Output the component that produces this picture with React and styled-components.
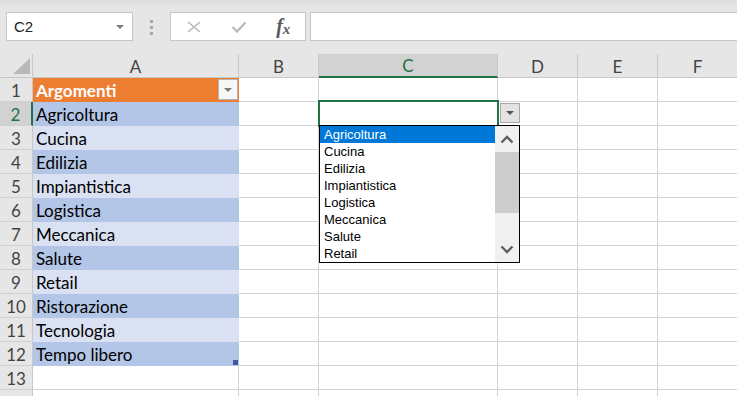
import React from "react";
import styled, { createGlobalStyle } from "styled-components";

const GlobalStyle = createGlobalStyle`
  html, body {
    margin: 0;
    padding: 0;
  }
  body {
    width: 737px;
    height: 396px;
    overflow: hidden;
    background: #fff;
    font-family: Lato, "Liberation Sans", sans-serif;
  }
`;

const columns = ["A", "B", "C", "D", "E", "F"];
const topics = [
  "Agricoltura",
  "Cucina",
  "Edilizia",
  "Impiantistica",
  "Logistica",
  "Meccanica",
  "Salute",
  "Retail",
  "Ristorazione",
  "Tecnologia",
  "Tempo libero",
];
const listItems = topics.slice(0, 8);

export default function App() {
  const rows = Array.from({ length: 14 }, (_, i) => i + 1);

  const cellFill = (row, col) => {
    if (col !== 0) return null;
    if (row === 1) return "#ed7d31";
    if (row >= 2 && row <= 12) return row % 2 === 0 ? "#b4c6e7" : "#d9e1f2";
    return null;
  };

  return (
    <>
      <GlobalStyle />
      <Toolbar>
        <NameBox>
          <span>C2</span>
          <SmallArrow />
        </NameBox>
        <Grip>
          <i />
          <i />
          <i />
        </Grip>
        <FxBox>
          <svg width="16" height="12" viewBox="0 0 16 12">
            <path d="M2 1 L14 11 M14 1 L2 11" stroke="#b8b8b8" strokeWidth="1.6" fill="none" />
          </svg>
          <svg width="16" height="12" viewBox="0 0 16 12">
            <path d="M1.5 6 L6 10.5 L14.5 1.5" stroke="#b8b8b8" strokeWidth="2.2" fill="none" />
          </svg>
          <FxLabel>
            f<sub>x</sub>
          </FxLabel>
        </FxBox>
        <FormulaInput />
      </Toolbar>

      <Sheet>
        <Corner />
        {columns.map((c) => (
          <ColHead key={c} $active={c === "C"}>
            {c}
          </ColHead>
        ))}
        {rows.map((r) => (
          <React.Fragment key={r}>
            {/* the last row is only a sliver at the window's bottom edge */}
            <RowHead $active={r === 2}>{r < 14 ? r : null}</RowHead>
            {columns.map((c, ci) => {
              const fill = cellFill(r, ci);
              return (
                <Cell key={c} $fill={fill} $header={r === 1 && ci === 0} $raised={ci === 2 && r === 2}>
                  {ci === 0 && r === 1 && (
                    <>
                      Argomenti
                      <FilterButton>
                        <SmallArrow />
                      </FilterButton>
                    </>
                  )}
                  {ci === 0 && r >= 2 && r <= 12 && topics[r - 2]}
                  {ci === 0 && r === 12 && <ResizeHandle />}
                  {ci === 2 && r === 2 && (
                    <>
                      <Selection />
                      <ListButton>
                        <SmallArrow $dark />
                      </ListButton>
                      <DropList>
                        <Items>
                          {listItems.map((t, i) => (
                            <Item key={t} $selected={i === 0}>
                              {t}
                            </Item>
                          ))}
                        </Items>
                        <ScrollBar>
                          <ScrollArrow>
                            <svg width="14" height="9" viewBox="0 0 14 9">
                              <path d="M1.5 7.5 L7 2 L12.5 7.5" stroke="#5f5f5f" strokeWidth="2.4" fill="none" />
                            </svg>
                          </ScrollArrow>
                          <Track>
                            <Thumb />
                          </Track>
                          <ScrollArrow>
                            <svg width="14" height="9" viewBox="0 0 14 9">
                              <path d="M1.5 1.5 L7 7 L12.5 1.5" stroke="#5f5f5f" strokeWidth="2.4" fill="none" />
                            </svg>
                          </ScrollArrow>
                        </ScrollBar>
                      </DropList>
                    </>
                  )}
                </Cell>
              );
            })}
          </React.Fragment>
        ))}
      </Sheet>
    </>
  );
}

const Toolbar = styled.div`
  display: flex;
  align-items: flex-start;
  height: 54px;
  box-sizing: border-box;
  padding: 12px 0 0 6px;
  background: linear-gradient(#dcdcdc, #e6e6e6 6px);
`;

const NameBox = styled.div`
  display: flex;
  align-items: center;
  justify-content: space-between;
  width: 127px;
  height: 29px;
  box-sizing: border-box;
  padding: 0 8px 0 7px;
  background: #fff;
  border: 1px solid #c6c6c6;
  font-family: "Liberation Sans", sans-serif;
  font-size: 15px;
  color: #222;
`;

const SmallArrow = styled.span`
  width: 0;
  height: 0;
  border-left: 4px solid transparent;
  border-right: 4px solid transparent;
  border-top: 4px solid ${(p) => (p.$dark ? "#555" : "#7a7a7a")};
`;

const Grip = styled.div`
  display: flex;
  flex-direction: column;
  gap: 3px;
  margin: 8px 0 0 17px;

  i {
    display: block;
    width: 3px;
    height: 3px;
    background: #a6a6a6;
  }
`;

const FxBox = styled.div`
  display: flex;
  align-items: center;
  justify-content: space-around;
  width: 136px;
  height: 29px;
  box-sizing: border-box;
  margin-left: 17px;
  background: #fff;
  border: 1px solid #c6c6c6;
`;

const FxLabel = styled.span`
  font-family: "Liberation Serif", serif;
  font-style: italic;
  font-weight: bold;
  font-size: 20px;
  color: #5a5a5a;
  line-height: 1;
  margin-top: -2px;

  sub {
    font-size: 15px;
    vertical-align: baseline;
    position: relative;
    top: 1px;
  }
`;

const FormulaInput = styled.div`
  flex: 1;
  height: 29px;
  box-sizing: border-box;
  margin-left: 4px;
  background: #fff;
  border: 1px solid #c6c6c6;
  border-right: none;
`;

const Sheet = styled.div`
  display: grid;
  grid-template-columns: 33px 206px 80px 179px 80px 80px 80px;
  grid-auto-rows: 24px;
`;

const Corner = styled.div`
  position: relative;
  background: #e6e6e6;
  border-right: 1px solid #c8c8c8;
  border-bottom: 1px solid #c8c8c8;

  &::after {
    content: "";
    position: absolute;
    right: 2px;
    bottom: 3px;
    width: 17px;
    height: 16px;
    background: #b9b9b9;
    clip-path: polygon(100% 0, 100% 100%, 0 100%);
  }
`;

const ColHead = styled.div`
  display: flex;
  align-items: center;
  justify-content: center;
  box-sizing: border-box;
  background: ${(p) => (p.$active ? "#d2d2d2" : "#e6e6e6")};
  color: ${(p) => (p.$active ? "#217346" : "#444")};
  border-right: 1px solid #c8c8c8;
  border-bottom: ${(p) => (p.$active ? "2px solid #217346" : "1px solid #c8c8c8")};
  font-size: 17px;
  padding-top: 1px;
`;

const RowHead = styled.div`
  display: flex;
  align-items: center;
  justify-content: center;
  box-sizing: border-box;
  background: ${(p) => (p.$active ? "#d2d2d2" : "#e6e6e6")};
  color: ${(p) => (p.$active ? "#217346" : "#444")};
  border-right: ${(p) => (p.$active ? "2px solid #217346" : "1px solid #c8c8c8")};
  border-bottom: 1px solid #d0d0d0;
  font-size: 17px;
  padding-top: 1px;
`;

const Cell = styled.div`
  position: relative;
  z-index: ${(p) => (p.$raised ? 2 : "auto")};
  display: flex;
  align-items: center;
  box-sizing: border-box;
  padding: 1px 0 0 3px;
  background: ${(p) => p.$fill || "#fff"};
  border-right: 1px solid ${(p) => p.$fill || "#d4d4d4"};
  border-bottom: 1px solid ${(p) => p.$fill || "#d4d4d4"};
  font-size: 17px;
  font-weight: ${(p) => (p.$header ? 700 : 400)};
  color: ${(p) => (p.$header ? "#fff" : "#000")};
  white-space: nowrap;
`;

const FilterButton = styled.div`
  position: absolute;
  top: 1px;
  right: 0;
  width: 20px;
  height: 21px;
  box-sizing: border-box;
  display: flex;
  align-items: center;
  justify-content: center;
  background: #f7f7f7;
  border: 1px solid #b5b5b5;
`;

const ResizeHandle = styled.div`
  position: absolute;
  right: 0;
  bottom: 0;
  width: 5px;
  height: 5px;
  background: #3f58a5;
`;

const Selection = styled.div`
  position: absolute;
  left: -1px;
  top: -2px;
  width: 181px;
  height: 27px;
  box-sizing: border-box;
  border: 2px solid #217346;
  pointer-events: none;
`;

const ListButton = styled.div`
  position: absolute;
  left: 181px;
  top: 1px;
  width: 20px;
  height: 20px;
  box-sizing: border-box;
  display: flex;
  align-items: center;
  justify-content: center;
  background: #e3e3e3;
  border: 1px solid #a9a9a9;
`;

const DropList = styled.div`
  position: absolute;
  left: 0;
  top: 23px;
  display: flex;
  width: 201px;
  height: 138px;
  box-sizing: border-box;
  background: #fff;
  border: 1px solid #000;
`;

const Items = styled.div`
  flex: 1;
  display: flex;
  flex-direction: column;
`;

const Item = styled.div`
  height: 17px;
  line-height: 17px;
  padding-left: 4px;
  font-family: "Liberation Sans", sans-serif;
  font-size: 13px;
  background: ${(p) => (p.$selected ? "#0078d7" : "transparent")};
  color: ${(p) => (p.$selected ? "#fff" : "#000")};
`;

const ScrollBar = styled.div`
  display: flex;
  flex-direction: column;
  width: 24px;
  background: #f0f0f0;
`;

const ScrollArrow = styled.div`
  height: 26px;
  display: flex;
  align-items: center;
  justify-content: center;
`;

const Track = styled.div`
  flex: 1;
`;

const Thumb = styled.div`
  height: 61px;
  background: #cdcdcd;
`;
